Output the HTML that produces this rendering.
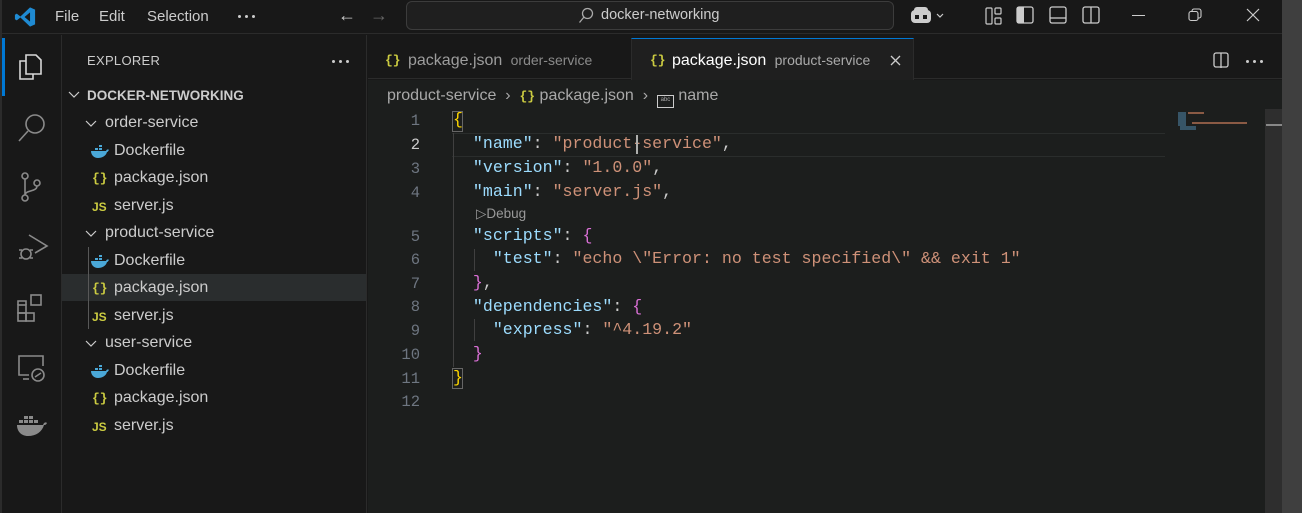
<!DOCTYPE html>
<html><head><meta charset="utf-8"><style>
*{margin:0;padding:0;box-sizing:border-box}
body{width:1302px;height:513px;background:#181818;position:relative;overflow:hidden;font-family:"Liberation Sans","DejaVu Sans",sans-serif;color:#cccccc}
.abs{position:absolute}
.t{font-size:15px;white-space:nowrap}
.mono{font-family:"Liberation Mono","DejaVu Sans Mono",monospace;font-size:16.6px;white-space:pre;position:absolute}
.k{color:#9cdcfe}.s{color:#ce9178}.p{color:#cccccc}.b1{color:#ffd700}.b2{color:#da70d6}
.ln{position:absolute;width:40px;text-align:right;font-family:"Liberation Mono",monospace;font-size:15.5px;color:#6e7681}
.row{position:absolute;left:62px;width:304px;height:27px;font-size:15.5px;color:#cccccc;white-space:nowrap}
.json{color:#cbcb41;font-family:"Liberation Mono",monospace;font-size:13px;font-weight:bold}
.js{color:#cbcb41;font-size:12px;font-weight:bold}
.f{font-size:16px}
</style></head><body>
<div class="abs" style="left:0;top:0;width:2px;height:513px;background:#2b2b2b"></div>
<div class="abs" style="left:2px;top:0;width:1280px;height:34px;background:#181818;border-bottom:1px solid #2b2b2b"></div>
<svg class="abs" style="left:14px;top:6px" width="22" height="22" viewBox="0 0 24 24"><path d="M17.5 1.5L23 4v16l-5.5 2.5L7 12.5l-4 3.2L1 14.5v-5l2-1.2 4 3.2zM17.5 7l-6 5 6 5z" fill="#1f8ad2"/></svg>
<div class="abs t" style="left:55px;top:8px">File</div>
<div class="abs t" style="left:99px;top:8px">Edit</div>
<div class="abs t" style="left:147px;top:8px">Selection</div>
<div class="abs" style="left:238px;top:15px;width:3px;height:3px;background:#ccc;border-radius:50%;box-shadow:7px 0 #ccc,14px 0 #ccc"></div>
<div class="abs t" style="left:338px;top:5px;font-size:18px">←</div>
<div class="abs t" style="left:370px;top:5px;font-size:18px;color:#666">→</div>
<div class="abs" style="left:406px;top:1px;width:488px;height:29px;border:1px solid #3c3c3c;border-radius:6px;background:#1f1f1f"></div>
<svg class="abs" style="left:578px;top:7px" width="16" height="17" viewBox="0 0 16 17"><circle cx="9.5" cy="6.5" r="5" fill="none" stroke="#aaa" stroke-width="1.3"/><path d="M6 10L1.5 15.5" stroke="#aaa" stroke-width="1.3"/></svg>
<div class="abs t" style="left:601px;top:7px;font-size:14.5px">docker-networking</div>
<svg class="abs" style="left:910px;top:6px" width="40" height="20" viewBox="0 0 40 20"><rect x="1" y="4" width="20" height="13" rx="4" fill="#ccc"/><rect x="5" y="9" width="4" height="4" fill="#181818"/><rect x="13" y="9" width="4" height="4" fill="#181818"/><rect x="4" y="1" width="14" height="6" rx="3" fill="#ccc"/><path d="M27 8l3 3 3-3" fill="none" stroke="#ccc" stroke-width="1.2"/></svg>
<svg class="abs" style="left:985px;top:7px" width="18" height="18" viewBox="0 0 18 18" fill="none" stroke="#ccc" stroke-width="1.2"><rect x="1" y="1" width="6" height="16" rx="1"/><rect x="10" y="1" width="6" height="6" rx="1"/><rect x="10" y="11" width="6" height="6" rx="1"/></svg>
<svg class="abs" style="left:1016px;top:6px" width="18" height="18" viewBox="0 0 18 18"><rect x="1" y="1" width="16" height="16" rx="2" fill="none" stroke="#ccc" stroke-width="1.3"/><rect x="1" y="1" width="7" height="16" fill="#ccc"/></svg>
<svg class="abs" style="left:1049px;top:6px" width="18" height="18" viewBox="0 0 18 18" fill="none" stroke="#ccc" stroke-width="1.3"><rect x="1" y="1" width="16" height="16" rx="2"/><path d="M1 12h16"/></svg>
<svg class="abs" style="left:1082px;top:6px" width="18" height="18" viewBox="0 0 18 18" fill="none" stroke="#ccc" stroke-width="1.3"><rect x="1" y="1" width="16" height="16" rx="2"/><path d="M9 1v16"/></svg>
<div class="abs" style="left:1132px;top:15px;width:13px;height:1px;background:#ccc"></div>
<svg class="abs" style="left:1188px;top:8px" width="14" height="14" viewBox="0 0 14 14" fill="none" stroke="#ccc" stroke-width="1.1"><rect x="1" y="3.5" width="9" height="9" rx="2"/><path d="M4 3.5V3a2 2 0 0 1 2-2h5a2 2 0 0 1 2 2v5a2 2 0 0 1-2 2h-1"/></svg>
<svg class="abs" style="left:1246px;top:8px" width="14" height="14" viewBox="0 0 14 14" stroke="#ccc" stroke-width="1.2"><path d="M1 1l12 12M13 1L1 13"/></svg>
<div class="abs" style="left:1282px;top:0;width:20px;height:513px;background:#3f3f3f"></div>

<div class="abs" style="left:2px;top:35px;width:60px;height:478px;background:#181818;border-right:1px solid #2b2b2b"></div>
<div class="abs" style="left:2px;top:38px;width:3px;height:58px;background:#0078d4"></div>
<svg class="abs" style="left:17px;top:52px" width="28" height="30" viewBox="0 0 28 30" fill="none" stroke="#d7d7d7" stroke-width="1.6"><path d="M9 3h10l5 5v14H9z"/><path d="M9 9H3v18h13v-5"/></svg>
<svg class="abs" style="left:17px;top:112px" width="30" height="32" viewBox="0 0 30 32" fill="none" stroke="#8a8a8a" stroke-width="1.6"><circle cx="18" cy="12" r="9"/><path d="M11 19L2 29"/></svg>
<svg class="abs" style="left:17px;top:171px" width="28" height="32" viewBox="0 0 28 32" fill="none" stroke="#8a8a8a" stroke-width="1.6"><circle cx="8" cy="5" r="3"/><circle cx="8" cy="27" r="3"/><circle cx="20" cy="12" r="3"/><path d="M8 8v16M20 15c0 6-12 4-12 9"/></svg>
<svg class="abs" style="left:17px;top:233px" width="32" height="32" viewBox="0 0 32 32" fill="none" stroke="#8a8a8a" stroke-width="1.6"><path d="M12 2l18 11-12 7"/><circle cx="9" cy="21" r="5"/><path d="M2 17h3M2 25h3M13 17h3M13 25h3"/></svg>
<svg class="abs" style="left:17px;top:292px" width="30" height="32" viewBox="0 0 30 32" fill="none" stroke="#8a8a8a" stroke-width="1.6"><rect x="1" y="13" width="8" height="8"/><rect x="1" y="21" width="8" height="8"/><rect x="9" y="21" width="8" height="8"/><rect x="14" y="3" width="10" height="10"/><path d="M1 13V9h8v4"/></svg>
<svg class="abs" style="left:17px;top:354px" width="30" height="30" viewBox="0 0 30 30" fill="none" stroke="#8a8a8a" stroke-width="1.6"><path d="M12 21H2V2h24v10"/><path d="M6 25h6"/><circle cx="21" cy="21" r="6"/><path d="M18 23l6-4"/></svg>
<svg class="abs" style="left:16px;top:414px" width="32" height="24" viewBox="0 0 32 24" fill="#8a8a8a"><rect x="8" y="2" width="4" height="3"/><rect x="13" y="2" width="4" height="3"/><rect x="3" y="6" width="4" height="3"/><rect x="8" y="6" width="4" height="3"/><rect x="13" y="6" width="4" height="3"/><rect x="18" y="6" width="4" height="3"/><path d="M1 11h26c1-3 3-3 4-2-1 2-2 2-3 2-2 7-8 11-16 11C5 22 1 17 1 11z"/></svg>

<div class="abs" style="left:62px;top:35px;width:305px;height:478px;background:#181818;border-right:1px solid #2b2b2b"></div>
<div class="abs" style="left:87px;top:53px;font-size:13px;letter-spacing:.3px">EXPLORER</div>
<div class="abs" style="left:332px;top:60px;width:3px;height:3px;background:#ccc;border-radius:50%;box-shadow:7px 0 #ccc,14px 0 #ccc"></div>
<svg class="abs" style="left:68px;top:91px" width="12" height="8" viewBox="0 0 12 8" fill="none" stroke="#ccc" stroke-width="1.2"><path d="M1 1l5 5 5-5"/></svg>
<div class="abs" style="left:87px;top:88px;font-size:13.5px;font-weight:bold;color:#cccccc">DOCKER-NETWORKING</div>
<div class="row" style="top:274px;background:#2a2d2e"></div>
<div class="abs" style="left:88px;top:247px;width:1px;height:82px;background:#585858"></div>
<svg class="abs" style="left:85px;top:120px" width="12" height="8" viewBox="0 0 12 8" fill="none" stroke="#ccc" stroke-width="1.2"><path d="M1 1l5 5 5-5"/></svg>
<svg class="abs" style="left:85px;top:230px" width="12" height="8" viewBox="0 0 12 8" fill="none" stroke="#ccc" stroke-width="1.2"><path d="M1 1l5 5 5-5"/></svg>
<svg class="abs" style="left:85px;top:340px" width="12" height="8" viewBox="0 0 12 8" fill="none" stroke="#ccc" stroke-width="1.2"><path d="M1 1l5 5 5-5"/></svg>
<div class="abs t f" style="left:105px;top:114px">order-service</div>
<div class="abs t f" style="left:105px;top:224px">product-service</div>
<div class="abs t f" style="left:105px;top:334px">user-service</div>
<div class="abs t f" style="left:114px;top:142px">Dockerfile</div>
<div class="abs t f" style="left:114px;top:169px">package.json</div>
<div class="abs t f" style="left:114px;top:197px">server.js</div>
<div class="abs t f" style="left:114px;top:252px">Dockerfile</div>
<div class="abs t f" style="left:114px;top:279px">package.json</div>
<div class="abs t f" style="left:114px;top:307px">server.js</div>
<div class="abs t f" style="left:114px;top:362px">Dockerfile</div>
<div class="abs t f" style="left:114px;top:389px">package.json</div>
<div class="abs t f" style="left:114px;top:417px">server.js</div>
<svg class="abs" style="left:91px;top:145px" width="18" height="13" viewBox="0 0 18 13" fill="#4aa8d8"><path d="M0 6h15c1-2 2-2 3-1-1 1-1 2-2 2-1 4-5 6-9 6C3 13 0 10 0 6zM4 3h3v2H4zM8 3h3v2H8zM8 0h3v2H8z"/></svg>
<svg class="abs" style="left:91px;top:255px" width="18" height="13" viewBox="0 0 18 13" fill="#4aa8d8"><path d="M0 6h15c1-2 2-2 3-1-1 1-1 2-2 2-1 4-5 6-9 6C3 13 0 10 0 6zM4 3h3v2H4zM8 3h3v2H8zM8 0h3v2H8z"/></svg>
<svg class="abs" style="left:91px;top:365px" width="18" height="13" viewBox="0 0 18 13" fill="#4aa8d8"><path d="M0 6h15c1-2 2-2 3-1-1 1-1 2-2 2-1 4-5 6-9 6C3 13 0 10 0 6zM4 3h3v2H4zM8 3h3v2H8zM8 0h3v2H8z"/></svg>
<div class="abs json" style="left:92px;top:171px">{}</div>
<div class="abs json" style="left:92px;top:281px">{}</div>
<div class="abs json" style="left:92px;top:391px">{}</div>
<div class="abs js" style="left:92px;top:200px">JS</div>
<div class="abs js" style="left:92px;top:310px">JS</div>
<div class="abs js" style="left:92px;top:420px">JS</div>

<div class="abs" style="left:368px;top:35px;width:914px;height:44px;background:#181818;border-bottom:1px solid #2b2b2b"></div>
<div class="abs" style="left:631px;top:38px;width:283px;height:42px;background:#1f1f1f;border-top:1px solid #0078d4;border-left:1px solid #2b2b2b;border-right:1px solid #2b2b2b"></div>
<div class="abs json" style="left:385px;top:53px">{}</div>
<div class="abs t" style="left:408px;top:52px;color:#9d9d9d;font-size:16px">package.json <span style="font-size:14px;color:#8a8a8a">&nbsp;order-service</span></div>
<div class="abs json" style="left:650px;top:53px">{}</div>
<div class="abs t" style="left:672px;top:52px;color:#ffffff;font-size:16px">package.json <span style="font-size:14px;color:#aaaaaa">&nbsp;product-service</span></div>
<svg class="abs" style="left:890px;top:55px" width="11" height="11" viewBox="0 0 11 11" stroke="#ccc" stroke-width="1.3"><path d="M1 1l9 9M10 1l-9 9"/></svg>
<svg class="abs" style="left:1213px;top:52px" width="16" height="16" viewBox="0 0 16 16" fill="none" stroke="#ccc" stroke-width="1.3"><rect x="1" y="1" width="14" height="14" rx="2"/><path d="M8 1v15"/></svg>
<div class="abs" style="left:1246px;top:60px;width:3px;height:3px;background:#ccc;border-radius:50%;box-shadow:7px 0 #ccc,14px 0 #ccc"></div>

<div class="abs" style="left:368px;top:80px;width:914px;height:433px;background:#1c1e1d"></div>
<div class="abs t" style="left:387px;top:87px;font-size:16px;color:#a9a9a9">product-service &nbsp;›&nbsp; <span class="json" style="font-size:13px">{}</span> package.json &nbsp;›&nbsp; <span style="display:inline-block;width:17px;height:13px;border:1.5px solid #ccc;vertical-align:-1px;font-size:6px;line-height:9px;text-align:center">abc</span> name</div>
<div class="abs" style="left:452px;top:133px;width:713px;height:24px;border-top:1px solid #2a2d2c;border-bottom:1px solid #2a2d2c"></div>
<div class="abs" style="left:453px;top:133px;width:1px;height:234px;background:#404040"></div>
<div class="abs" style="left:474px;top:249px;width:1px;height:22px;background:#404040"></div>
<div class="abs" style="left:474px;top:319px;width:1px;height:22px;background:#404040"></div>
<div class="ln" style="left:380px;top:112px">1</div>
<div class="ln" style="left:380px;top:136px;color:#ccc">2</div>
<div class="ln" style="left:380px;top:160px">3</div>
<div class="ln" style="left:380px;top:184px">4</div>
<div class="ln" style="left:380px;top:228px">5</div>
<div class="ln" style="left:380px;top:251px">6</div>
<div class="ln" style="left:380px;top:275px">7</div>
<div class="ln" style="left:380px;top:298px">8</div>
<div class="ln" style="left:380px;top:322px">9</div>
<div class="ln" style="left:380px;top:346px">10</div>
<div class="ln" style="left:380px;top:370px">11</div>
<div class="ln" style="left:380px;top:393px">12</div>
<div class="abs" style="left:452px;top:111px;width:11px;height:21px;border:1px solid #666"></div>
<div class="abs" style="left:452px;top:368px;width:11px;height:21px;border:1px solid #666"></div>
<div class="mono" style="left:453px;top:110px"><span class="b1">{</span></div>
<div class="mono" style="left:453px;top:134px">  <span class="k">"name"</span>: <span class="s">"product-service"</span>,</div>
<div class="abs" style="left:636px;top:135px;width:2px;height:19px;background:#aeafad"></div>
<div class="mono" style="left:453px;top:158px">  <span class="k">"version"</span>: <span class="s">"1.0.0"</span>,</div>
<div class="mono" style="left:453px;top:182px">  <span class="k">"main"</span>: <span class="s">"server.js"</span>,</div>
<div class="abs" style="left:476px;top:206px;font-size:13.5px;color:#999">▷Debug</div>
<div class="mono" style="left:453px;top:226px">  <span class="k">"scripts"</span>: <span class="b2">{</span></div>
<div class="mono" style="left:453px;top:249px">    <span class="k">"test"</span>: <span class="s">"echo \"Error: no test specified\" &amp;&amp; exit 1"</span></div>
<div class="mono" style="left:453px;top:273px">  <span class="b2">}</span>,</div>
<div class="mono" style="left:453px;top:297px">  <span class="k">"dependencies"</span>: <span class="b2">{</span></div>
<div class="mono" style="left:453px;top:320px">    <span class="k">"express"</span>: <span class="s">"^4.19.2"</span></div>
<div class="mono" style="left:453px;top:344px">  <span class="b2">}</span></div>
<div class="mono" style="left:453px;top:368px"><span class="b1">}</span></div>
<div class="abs" style="left:1178px;top:112px;width:8px;height:14px;background:#4a7a9a;opacity:.6"></div>
<div class="abs" style="left:1188px;top:112px;width:16px;height:2px;background:#8a5a44"></div>
<div class="abs" style="left:1192px;top:122px;width:55px;height:2px;background:#8a5a44"></div>
<div class="abs" style="left:1180px;top:126px;width:16px;height:4px;background:#4a7a9a;opacity:.6"></div>
<div class="abs" style="left:1265px;top:109px;width:17px;height:404px;background:#2e2e2e"></div>
<div class="abs" style="left:1266px;top:124px;width:16px;height:2px;background:#888"></div>
</body></html>
